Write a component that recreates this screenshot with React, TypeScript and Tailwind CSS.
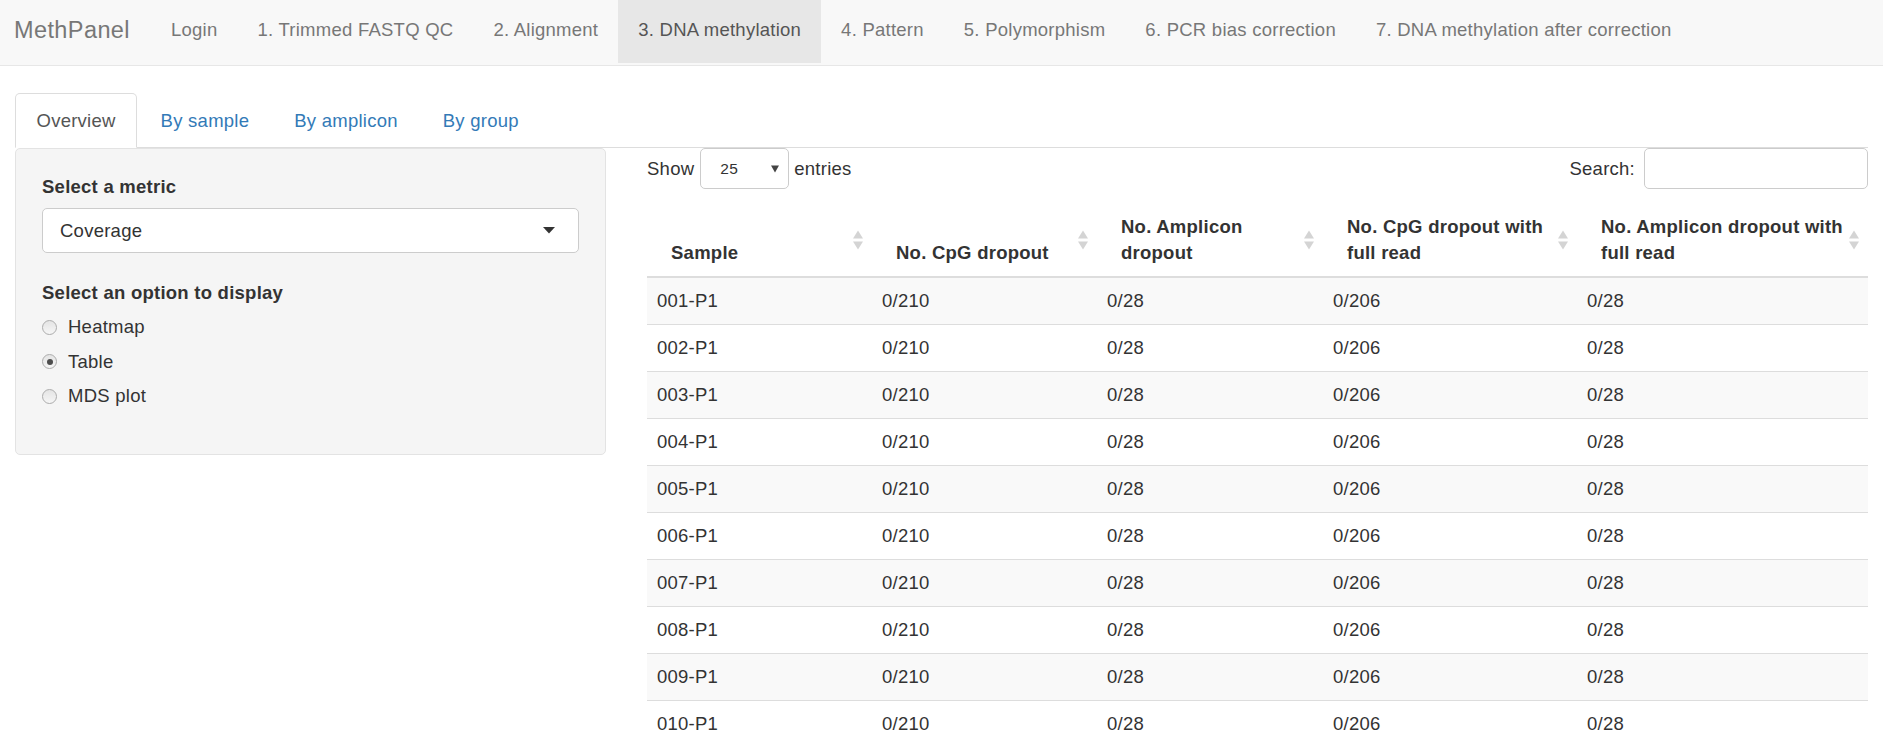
import React from "react";

const navItems = [
  "Login",
  "1. Trimmed FASTQ QC",
  "2. Alignment",
  "3. DNA methylation",
  "4. Pattern",
  "5. Polymorphism",
  "6. PCR bias correction",
  "7. DNA methylation after correction",
];

const tabs = ["Overview", "By sample", "By amplicon", "By group"];

const rows = Array.from({ length: 10 }, (_, i) => `${String(i + 1).padStart(3, "0")}-P1`);

function SortIcon() {
  return (
    <svg
      width="10"
      height="20"
      viewBox="0 0 10 20"
      className="absolute right-[9px] top-1/2 -translate-y-1/2"
    >
      <polygon points="0,8.5 5,0.5 10,8.5" fill="#d4d4d4" />
      <polygon points="0,11.5 10,11.5 5,19.5" fill="#d4d4d4" />
    </svg>
  );
}

function Radio({ checked }: { checked?: boolean }) {
  return (
    <span className="flex h-[15px] w-[15px] items-center justify-center rounded-full border border-[#acacac] bg-gradient-to-b from-[#e4e4e4] to-[#f6f6f6]">
      {checked && <span className="h-[6px] w-[6px] rounded-full bg-[#4d4d4d]" />}
    </span>
  );
}

export default function App() {
  const headers: React.ReactNode[] = [
    "Sample",
    "No. CpG dropout",
    <>
      No. Amplicon
      <br />
      dropout
    </>,
    <>
      No. CpG dropout with
      <br />
      full read
    </>,
    <>
      No. Amplicon dropout with
      <br />
      full read
    </>,
  ];
  const cols = "grid grid-cols-[225px_225px_226px_254px_291px]";

  return (
    <div className="h-[747px] overflow-hidden bg-white font-['Liberation_Sans',Arial,Helvetica,sans-serif] text-[18.5px] leading-[26px] tracking-[0.25px] text-[#333]">
      {/* Navbar */}
      <nav className="flex h-[66px] items-start border-b border-[#e7e7e7] bg-[#f8f8f8]">
        <div className="flex h-[63px] items-center pb-[4px] pl-[14px] pr-[21px] text-[23.5px] tracking-[0.4px] text-[#777]">
          MethPanel
        </div>
        {navItems.map((item) => {
          const active = item === "3. DNA methylation";
          return (
            <div
              key={item}
              className={
                active
                  ? "flex h-[63px] items-center whitespace-nowrap bg-[#e7e7e7] px-[20px] pb-[4px] text-[#555]"
                  : "flex h-[63px] items-center whitespace-nowrap px-[20px] pb-[4px] text-[#777]"
              }
            >
              {item}
            </div>
          );
        })}
      </nav>

      <div className="px-[15px] pt-[27px]">
        {/* Tabs */}
        <div className="flex h-[55px] border-b border-[#ddd]">
          {tabs.map((t, i) => (
            <div
              key={t}
              className={
                i === 0
                  ? "relative z-10 -mb-px mr-[2px] flex h-[55px] items-center rounded-t-[5px] border border-[#ddd] border-b-transparent bg-white px-[20.5px] text-[#555]"
                  : "-mb-px mr-[2px] flex h-[55px] items-center rounded-t-[5px] border border-transparent px-[20.5px] text-[#337ab7]"
              }
            >
              {t}
            </div>
          ))}
        </div>

        <div className="flex">
          {/* Well */}
          <div className="h-[307px] w-[591px] shrink-0 rounded-[5px] border border-[#e3e3e3] bg-[#f5f5f5] px-[26px] pt-[25px]">
            <div className="h-[26px] font-bold">Select a metric</div>
            <div className="mt-[8px] flex h-[45px] items-center justify-between rounded-[5px] border border-[#ccc] bg-white pl-[17px] pr-[23px]">
              <span>Coverage</span>
              <svg width="12" height="7" viewBox="0 0 12 7">
                <polygon points="0,0 12,0 6,6.5" fill="#333" />
              </svg>
            </div>
            <div className="mt-[27px] h-[26px] font-bold">Select an option to display</div>
            <div className="mt-[4px]">
              {[
                ["Heatmap", false],
                ["Table", true],
                ["MDS plot", false],
              ].map(([label, checked]) => (
                <div key={label as string} className="flex h-[34.5px] items-center">
                  <Radio checked={checked as boolean} />
                  <span className="ml-[11px]">{label as string}</span>
                </div>
              ))}
            </div>
          </div>

          {/* Table area */}
          <div className="ml-[41px] w-[1221px] shrink-0">
            <div className="flex h-[41px] items-center justify-between">
              <div className="flex items-center">
                <span>Show</span>
                <div className="ml-[6px] flex h-[41px] w-[89px] items-center justify-between rounded-[5px] border border-[#ccc] bg-white pl-[19px] pr-[9px] text-[15.5px]">
                  <span>25</span>
                  <svg width="8" height="8" viewBox="0 0 8 8">
                    <polygon points="0,0.5 8,0.5 4,7.5" fill="#444" />
                  </svg>
                </div>
                <span className="ml-[5px]">entries</span>
              </div>
              <div className="flex items-center">
                <span className="mr-[9px]">Search:</span>
                <div className="h-[41px] w-[224px] rounded-[5px] border border-[#ccc] bg-white" />
              </div>
            </div>

            <div className="mt-[15px]">
              <div className={`${cols} border-b-2 border-[#ddd]`}>
                {headers.map((h, i) => (
                  <div
                    key={i}
                    className="relative flex items-end whitespace-nowrap pb-[10px] pl-[24px] pr-[30px] pt-[10px] font-bold"
                  >
                    <div className="flex min-h-[52px] items-end">
                      <span>{h}</span>
                    </div>
                    <SortIcon />
                  </div>
                ))}
              </div>
              {rows.map((r, i) => (
                <div
                  key={r}
                  className={`${cols} h-[47px] border-b border-[#ddd] ${i % 2 === 0 ? "bg-[#f9f9f9]" : "bg-white"}`}
                >
                  {[r, "0/210", "0/28", "0/206", "0/28"].map((c, j) => (
                    <div key={j} className="flex items-center pl-[10px]">
                      {c}
                    </div>
                  ))}
                </div>
              ))}
            </div>
          </div>
        </div>
      </div>
    </div>
  );
}
